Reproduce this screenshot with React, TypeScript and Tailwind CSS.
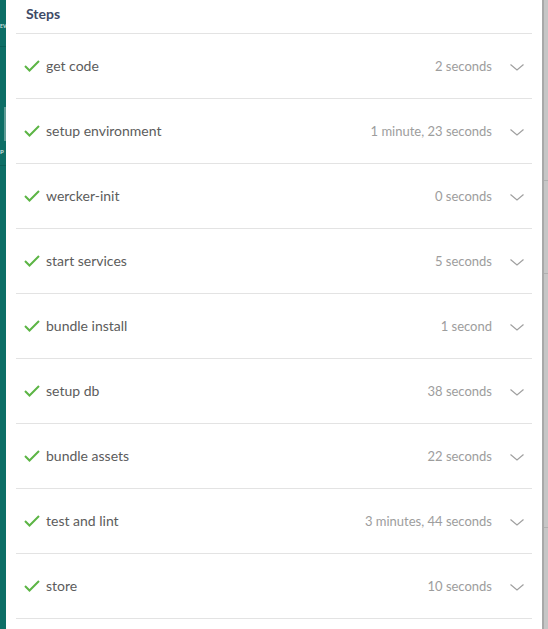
import React from "react";

const steps: { name: string; time: string }[] = [
  { name: "get code", time: "2 seconds" },
  { name: "setup environment", time: "1 minute, 23 seconds" },
  { name: "wercker-init", time: "0 seconds" },
  { name: "start services", time: "5 seconds" },
  { name: "bundle install", time: "1 second" },
  { name: "setup db", time: "38 seconds" },
  { name: "bundle assets", time: "22 seconds" },
  { name: "test and lint", time: "3 minutes, 44 seconds" },
  { name: "store", time: "10 seconds" },
];

const Check = () => (
  <svg width="16" height="12" viewBox="0 0 16 12" fill="none">
    <path d="M1 6 L5.5 10.5 L15 1" stroke="#5cb545" strokeWidth="2" />
  </svg>
);

const Chevron = () => (
  <svg width="14" height="7" viewBox="0 0 14 7" fill="none">
    <path d="M0.5 0.5 L7 6 L13.5 0.5" stroke="#a0a0a0" strokeWidth="1.2" />
  </svg>
);

export default function App() {
  return (
    <div
      className="flex w-[548px] h-[629px] overflow-hidden"
      style={{ fontFamily: "Lato, 'Open Sans', sans-serif" }}
    >
      {/* dimmed page behind, left */}
      <div className="w-[6px] shrink-0 bg-[#0d6e66] flex flex-col overflow-hidden">
        <div className="h-[22px]" />
        <span className="text-[5px] font-bold text-white/80 leading-[8px]">EV</span>
        <div className="h-px bg-[#0a5f58] mt-[16px]" />
        <div className="h-[60px]" />
        <div className="h-[34px] w-[2px] ml-[4px] bg-[#5e9c96]" />
        <span className="text-[6px] font-bold text-white/80 leading-[10px] mt-[6px]">P</span>
        <div className="h-px bg-[#0a5f58] mt-[8px]" />
      </div>

      {/* panel */}
      <div className="flex-1 bg-white px-[10px]">
        <div className="h-[34px] border-b border-[#e3e3e3] pt-[5px] pl-[10px]">
          <h2 className="text-[14px] leading-[18px] font-bold text-[#3e4a66]">Steps</h2>
        </div>
        {steps.map((s) => (
          <div
            key={s.name}
            className="h-[65px] border-b border-[#e3e3e3] flex items-center pl-[8px] pr-[8px]"
          >
            <Check />
            <span className="ml-[6px] mb-[1px] text-[14px] leading-[18px] text-[#5c5c5c]">
              {s.name}
            </span>
            <span className="ml-auto text-[13px] leading-[18px] text-[#9d9d9d]">
              {s.time}
            </span>
            <span className="ml-[18px] mt-[2px] flex">
              <Chevron />
            </span>
          </div>
        ))}
      </div>

      {/* dimmed page behind, right */}
      <div className="w-[6px] shrink-0 bg-[#c6c6c6] border-l-2 border-[#a9a9a9] flex flex-col">
        <div className="h-[180px]" />
        <div className="h-px bg-[#b0b0b0]" />
        <div className="h-[92px]" />
        <div className="h-px bg-[#b0b0b0]" />
        <div className="h-[253px]" />
        <div className="h-px bg-[#b0b0b0]" />
      </div>
    </div>
  );
}
